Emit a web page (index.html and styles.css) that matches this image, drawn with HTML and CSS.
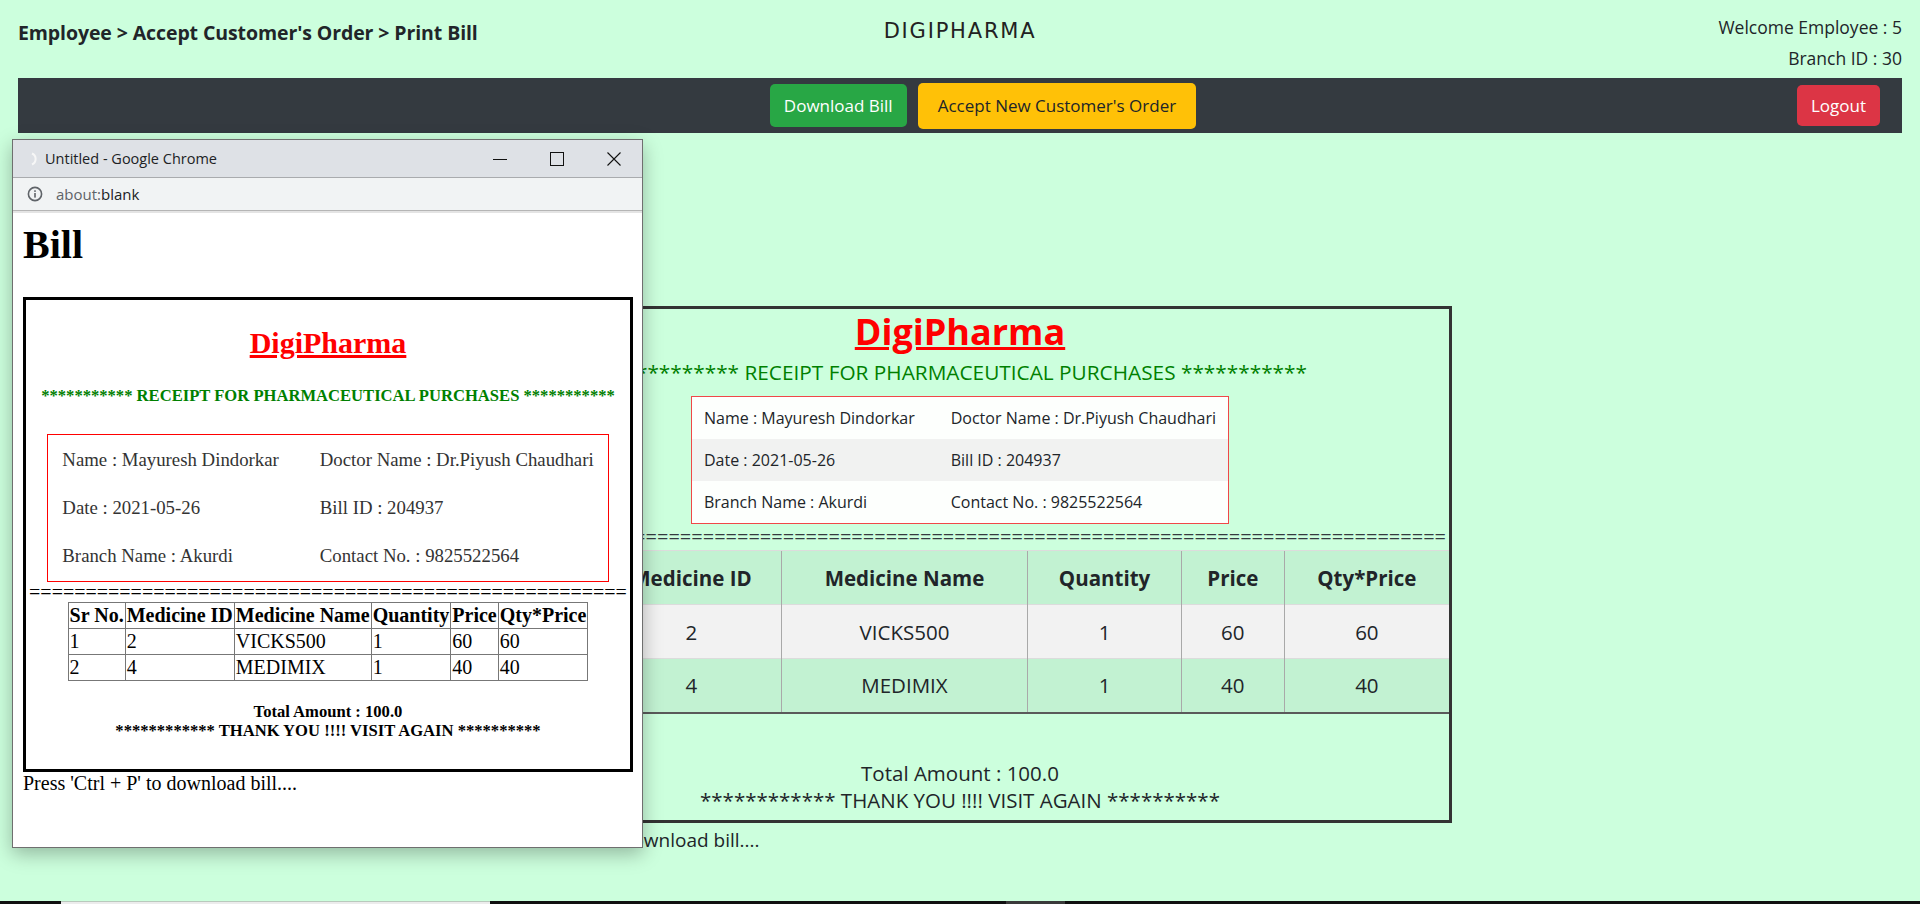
FILE: index.html
```html
<!DOCTYPE html>
<html lang="en">
<head>
<meta charset="utf-8">
<title>Print Bill</title>
<link rel="stylesheet" href="styles.css">
</head>
<body>
<header class="top">
  <div class="crumb">Employee &gt; Accept Customer's Order &gt; Print Bill</div>
  <div class="brand">DIGIPHARMA</div>
  <div class="who">
    <div>Welcome Employee : 5</div>
    <div>Branch ID : 30</div>
  </div>
</header>

<nav class="bar">
  <div class="bar-left"></div>
  <div class="bar-mid">
    <button class="btn btn-green">Download Bill</button>
    <button class="btn btn-yellow">Accept New Customer's Order</button>
  </div>
  <div class="bar-right">
    <button class="btn btn-red">Logout</button>
  </div>
</nav>

<main class="bill">
  <div class="receipt">
    <h2 class="r-title">DigiPharma</h2>
    <h5 class="r-sub">*********** RECEIPT FOR PHARMACEUTICAL PURCHASES ***********</h5>
    <table class="info">
      <tr><td>Name : Mayuresh Dindorkar</td><td>Doctor Name : Dr.Piyush Chaudhari</td></tr>
      <tr><td>Date : 2021-05-26</td><td>Bill ID : 204937</td></tr>
      <tr><td>Branch Name : Akurdi</td><td>Contact No. : 9825522564</td></tr>
    </table>
    <div class="eq">=====================================================================================</div>
    <table class="items">
      <thead>
        <tr><th class="c1">Sr No.</th><th class="c2">Medicine ID</th><th class="c3">Medicine Name</th><th class="c4">Quantity</th><th class="c5">Price</th><th class="c6">Qty*Price</th></tr>
      </thead>
      <tbody>
        <tr><td>1</td><td>2</td><td>VICKS500</td><td>1</td><td>60</td><td>60</td></tr>
        <tr><td>2</td><td>4</td><td>MEDIMIX</td><td>1</td><td>40</td><td>40</td></tr>
      </tbody>
    </table>
    <div class="total">
      <div>Total Amount : 100.0</div>
      <div>************ THANK YOU !!!! VISIT AGAIN **********</div>
    </div>
  </div>
  <p class="press">Press 'Ctrl + P' to download bill....</p>
</main>

<div class="popup">
  <div class="titlebar">
    <svg class="fav" width="10" height="16" viewBox="0 0 10 16"><path d="M3 2.5 A6 6 0 0 1 3 13.5" fill="none" stroke="#f7f7f7" stroke-width="2"/></svg>
    <span class="wtitle">Untitled - Google Chrome</span>
    <div class="wctl">
      <svg width="14" height="14" viewBox="0 0 14 14"><path d="M0 7.5H14" stroke="#111" stroke-width="1"/></svg>
    </div>
    <div class="wctl">
      <svg width="14" height="14" viewBox="0 0 14 14"><rect x="0.5" y="0.5" width="13" height="13" fill="none" stroke="#111" stroke-width="1"/></svg>
    </div>
    <div class="wctl">
      <svg width="14" height="14" viewBox="0 0 14 14"><path d="M0.5 0.5L13.5 13.5M13.5 0.5L0.5 13.5" stroke="#111" stroke-width="1.1"/></svg>
    </div>
  </div>
  <div class="addrbar">
    <svg class="infoic" width="16" height="16" viewBox="0 0 16 16">
      <circle cx="8" cy="8" r="6.6" fill="none" stroke="#5f6368" stroke-width="1.6"/>
      <rect x="7.2" y="7" width="1.6" height="4.6" fill="#5f6368"/>
      <rect x="7.2" y="4.3" width="1.6" height="1.6" fill="#5f6368"/>
    </svg>
    <span class="url"><span class="scheme">about:</span>blank</span>
  </div>
  <div class="pbody">
    <h1 class="p-h1">Bill</h1>
    <div class="pbox">
      <h2 class="p-title">DigiPharma</h2>
      <h5 class="p-sub">*********** RECEIPT FOR PHARMACEUTICAL PURCHASES ***********</h5>
      <table class="p-info">
        <tr><td>Name : Mayuresh Dindorkar</td><td>Doctor Name : Dr.Piyush Chaudhari</td></tr>
        <tr><td>Date : 2021-05-26</td><td>Bill ID : 204937</td></tr>
        <tr><td>Branch Name : Akurdi</td><td>Contact No. : 9825522564</td></tr>
      </table>
      <div class="p-eq">=====================================================</div>
      <table class="p-items">
        <tr><th>Sr No.</th><th>Medicine ID</th><th>Medicine Name</th><th>Quantity</th><th>Price</th><th>Qty*Price</th></tr>
        <tr><td>1</td><td>2</td><td>VICKS500</td><td>1</td><td>60</td><td>60</td></tr>
        <tr><td>2</td><td>4</td><td>MEDIMIX</td><td>1</td><td>40</td><td>40</td></tr>
      </table>
      <div class="p-total">
        <div>Total Amount : 100.0</div>
        <div>************ THANK YOU !!!! VISIT AGAIN **********</div>
      </div>
    </div>
    <p class="p-press">Press 'Ctrl + P' to download bill....</p>
  </div>
</div>

<div class="taskbar">
  <div class="tb-gap"></div>
  <div class="tb-light"></div>
  <div class="tb-dark1"></div>
  <div class="tb-mid"></div>
  <div class="tb-rest"></div>
</div>
</body>
</html>
```

FILE: styles.css
```css
* { box-sizing: border-box; }
html, body { margin: 0; padding: 0; }
body {
  width: 1920px;
  height: 904px;
  position: relative;
  overflow: hidden;
  background: #ccffdd;
  color: #212529;
  font-family: "Open Sans", "Noto Sans", sans-serif;
}

/* ---------- header ---------- */
.top {
  display: grid;
  grid-template-columns: 1fr auto 1fr;
  align-items: start;
  height: 78px;
  padding: 0 18px;
}
.crumb {
  font-weight: 700;
  font-size: 19.5px;
  line-height: 26px;
  padding-top: 20px;
  letter-spacing: -0.1px;
}
.brand {
  font-family: "DejaVu Sans", sans-serif;
  font-size: 21px;
  line-height: 28px;
  padding-top: 17px;
  letter-spacing: 1.8px;
  color: #222;
}
.who {
  justify-self: end;
  text-align: right;
  font-weight: 500;
  font-size: 17.5px;
  line-height: 31px;
  padding-top: 12px;
}

/* ---------- nav bar ---------- */
.bar {
  margin: 0 18px;
  height: 55px;
  background: #343a40;
  display: grid;
  grid-template-columns: 1fr auto 1fr;
  align-items: center;
}
.bar-mid {
  display: flex;
  align-items: center;
  gap: 11px;
  margin-left: 46px;
}
.bar-right {
  display: flex;
  justify-content: flex-end;
  padding-right: 22px;
}
.btn {
  border: 0;
  border-radius: 5px;
  font-family: "Open Sans", "Noto Sans", sans-serif;
  font-size: 17px;
  line-height: 24px;
  color: #fff;
  height: 43px;
  cursor: pointer;
}
.btn-green { background: #28a745; padding: 0 14px; }
.btn-yellow { background: #ffc107; color: #212529; padding: 0 20px; height: 46px; }
.btn-red { background: #dc3545; padding: 0 14px; height: 41px; }

/* ---------- main receipt ---------- */
.bill {
  width: 984px;
  margin: 173px auto 0;
}
.receipt {
  border: 3px solid #333;
  text-align: center;
  padding-bottom: 6px;
}
.r-title {
  margin: 0;
  font-size: 36px;
  line-height: 46px;
  font-weight: 700;
  color: #ff0000;
  text-decoration: underline;
}
.r-sub {
  margin: 5px 0 0;
  font-size: 20.8px;
  line-height: 24px;
  font-weight: 400;
  color: #008000;
  white-space: nowrap;
}
.info {
  margin: 12px auto 0;
  border: 1px solid #f04848;
  border-collapse: collapse;
  background: #fdfffd;
  text-align: left;
  font-size: 16px;
}
.info td {
  padding: 8px 12px;
  line-height: 26px;
  white-space: nowrap;
}
.info td + td { padding-left: 24px; }
.info tr:nth-child(2) td { background: #f1f2f1; }
.eq {
  font-size: 20px;
  line-height: 26px;
  white-space: nowrap;
  overflow: hidden;
  color: #343a40;
}
.items {
  width: 100%;
  border-collapse: collapse;
  font-size: 20.5px;
  border-bottom: 2px solid #5a5a5a;
}
.items th, .items td {
  height: 54px;
  padding: 0;
  text-align: center;
  line-height: 30px;
  border-left: 1px solid #a9a9a9;
  border-top: 1px solid #dcdcdc;
}
.items th:first-child, .items td:first-child { border-left: 0; }
.items th { background: #c2f2d2; font-weight: 700; }
.items tbody tr:nth-child(odd) td { background: #f2f2f2; }
.items tbody tr:nth-child(even) td { background: #c2f2d2; }
.c1 { width: 131px; }
.c2 { width: 180px; }
.c3 { width: 247px; }
.c4 { width: 154px; }
.c5 { width: 103px; }
.c6 { width: 165px; }
.total {
  margin-top: 46px;
  font-size: 20.5px;
  line-height: 27px;
}
.press {
  margin: 5px 0 0;
  font-size: 19px;
  line-height: 24px;
}

/* ---------- popup window ---------- */
.popup {
  position: absolute;
  left: 12px;
  top: 139px;
  width: 631px;
  height: 709px;
  border: 1px solid #6f6f6f;
  background: #fff;
  box-shadow: 0 6px 18px rgba(0, 0, 0, 0.28);
  display: flex;
  flex-direction: column;
  overflow: hidden;
}
.titlebar {
  height: 38px;
  flex: none;
  background: #dee1e6;
  border-bottom: 1px solid #a9abae;
  display: flex;
  align-items: center;
  font-family: "Open Sans", "Noto Sans", sans-serif;
  font-size: 14.5px;
  color: #202124;
}
.fav { margin-left: 16px; margin-right: 6px; flex: none; }
.wtitle { flex: 1; }
.wctl {
  width: 57px;
  height: 37px;
  display: flex;
  align-items: center;
  justify-content: center;
}
.addrbar {
  height: 33px;
  flex: none;
  background: #f1f3f4;
  border-bottom: 1px solid #b5b5b5;
  display: flex;
  align-items: center;
  padding-left: 14px;
  font-family: "Open Sans", "Noto Sans", sans-serif;
  font-size: 15px;
  color: #202124;
}
.infoic { margin-right: 13px; }
.scheme { color: #5f6368; }
.pbody {
  flex: 1;
  border-top: 2px solid #e4e4e4;
  padding: 9px 10px 0;
  font-family: "Liberation Serif", "Times New Roman", serif;
  font-size: 20px;
  color: #000;
}
.p-h1 {
  margin: 0;
  font-size: 40px;
  line-height: 46px;
  font-weight: 700;
}
.pbox {
  width: 610px;
  margin-top: 29px;
  border: 3px solid #000;
  text-align: center;
  padding-bottom: 29px;
}
.p-title {
  margin: 26px 0 0;
  font-size: 30px;
  line-height: 34px;
  font-weight: 700;
  color: #ff0000;
  text-decoration: underline;
}
.p-sub {
  margin: 26px 0 0;
  font-size: 16.6px;
  line-height: 19px;
  font-weight: 700;
  color: #008000;
}
.p-info {
  margin: 29px auto 0;
  border: 1px solid #ff0000;
  border-spacing: 2px;
  text-align: left;
  color: #333;
  font-size: 18.8px;
}
.p-info td {
  padding: 11px 12px;
  line-height: 24px;
  white-space: nowrap;
}
.p-info td:first-child { padding-right: 27px; }
.p-eq {
  line-height: 20px;
  white-space: nowrap;
  overflow: hidden;
}
.p-items {
  margin: 0 auto;
  border-collapse: collapse;
  text-align: left;
}
.p-items th, .p-items td {
  border: 1px solid #777;
  padding: 1px;
  line-height: 23px;
  white-space: nowrap;
}
.p-items th { text-align: left; }
.p-total {
  margin-top: 21px;
  font-size: 16.6px;
  line-height: 19px;
  font-weight: 700;
}
.p-press {
  margin: 0;
  line-height: 23px;
}

/* ---------- taskbar sliver ---------- */
.taskbar {
  position: absolute;
  left: 0;
  right: 0;
  bottom: 0;
  height: 3px;
  display: flex;
  background: #101010;
}
.tb-gap { width: 61px; }
.tb-light { width: 429px; background: #ececec; border-top: 1px solid #b9c9bd; }
.tb-dark1 { width: 516px; }
.tb-mid { width: 59px; background: #3a3a3a; }
.tb-rest { flex: 1; }
```
